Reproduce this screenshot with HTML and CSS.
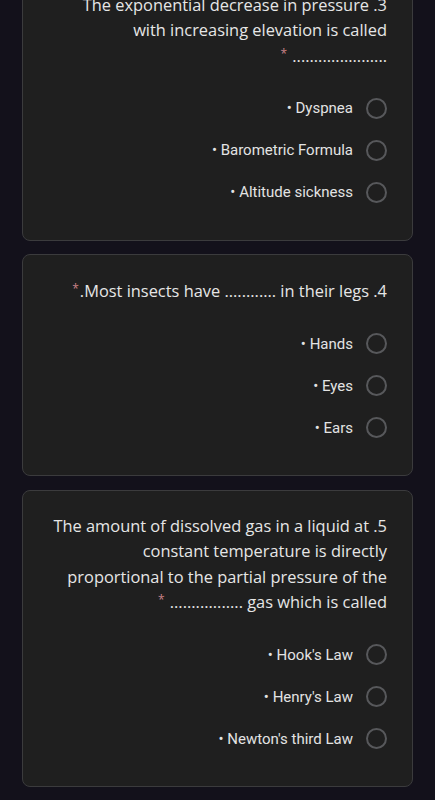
FILE: index.html
```html
<!DOCTYPE html>
<html lang="en">
<head>
<meta charset="utf-8">
<title>Quiz</title>
<link rel="stylesheet" href="styles.css">
</head>
<body>
<main class="list">
  <section class="card">
    <div class="question">
      <span class="line">The exponential decrease in pressure .3</span>
      <span class="line">with increasing elevation is called</span>
      <span class="line"><span class="req">*</span> ......................</span>
    </div>
    <div class="options">
      <label class="option"><span class="text">• Dyspnea</span><span class="radio"></span></label>
      <label class="option"><span class="text">• Barometric Formula</span><span class="radio"></span></label>
      <label class="option"><span class="text">• Altitude sickness</span><span class="radio"></span></label>
    </div>
  </section>

  <section class="card">
    <div class="question">
      <span class="line"><span class="req">*</span>.Most insects have ............ in their legs .4</span>
    </div>
    <div class="options">
      <label class="option"><span class="text">• Hands</span><span class="radio"></span></label>
      <label class="option"><span class="text">• Eyes</span><span class="radio"></span></label>
      <label class="option"><span class="text">• Ears</span><span class="radio"></span></label>
    </div>
  </section>

  <section class="card">
    <div class="question">
      <span class="line">The amount of dissolved gas in a liquid at .5</span>
      <span class="line">constant temperature is directly</span>
      <span class="line">proportional to the partial pressure of the</span>
      <span class="line"><span class="req">*</span> ................. gas which is called</span>
    </div>
    <div class="options">
      <label class="option"><span class="text">• Hook's Law</span><span class="radio"></span></label>
      <label class="option"><span class="text">• Henry's Law</span><span class="radio"></span></label>
      <label class="option"><span class="text">• Newton's third Law</span><span class="radio"></span></label>
    </div>
  </section>

  <section class="card card-next"></section>
</main>
</body>
</html>
```

FILE: styles.css
```css
html, body {
  margin: 0;
  padding: 0;
  background: #13111b;
  height: 100%;
  overflow: hidden;
}

.list {
  display: flex;
  flex-direction: column;
  gap: 13.5px;
  padding: 0 22px;
  margin-top: -31.5px;
}

.card {
  background: #1f1f1f;
  border: 1px solid #3b3b3d;
  border-radius: 8px;
  padding: 22.5px 25px 26.5px;
}

.card-next {
  height: 120px;
}

.question {
  display: flex;
  flex-direction: column;
  align-items: flex-end;
  font-family: "Open Sans", sans-serif;
  font-size: 16.4px;
  line-height: 25.3px;
  color: #e6e6e6;
  margin-bottom: 19.5px;
}

.line {
  white-space: nowrap;
  height: 25.3px;
}

.req {
  color: #c98288;
  font-size: 12px;
  line-height: 0;
  vertical-align: 4px;
  margin-right: 1px;
}

.options {
  display: flex;
  flex-direction: column;
}

.option {
  height: 42px;
  display: flex;
  align-items: center;
  justify-content: flex-end;
  gap: 13px;
  font-family: Roboto, sans-serif;
  font-size: 15px;
  color: #e3e3e3;
}

.radio {
  width: 17px;
  height: 17px;
  border: 2px solid #57585b;
  border-radius: 50%;
  flex: none;
}
```
